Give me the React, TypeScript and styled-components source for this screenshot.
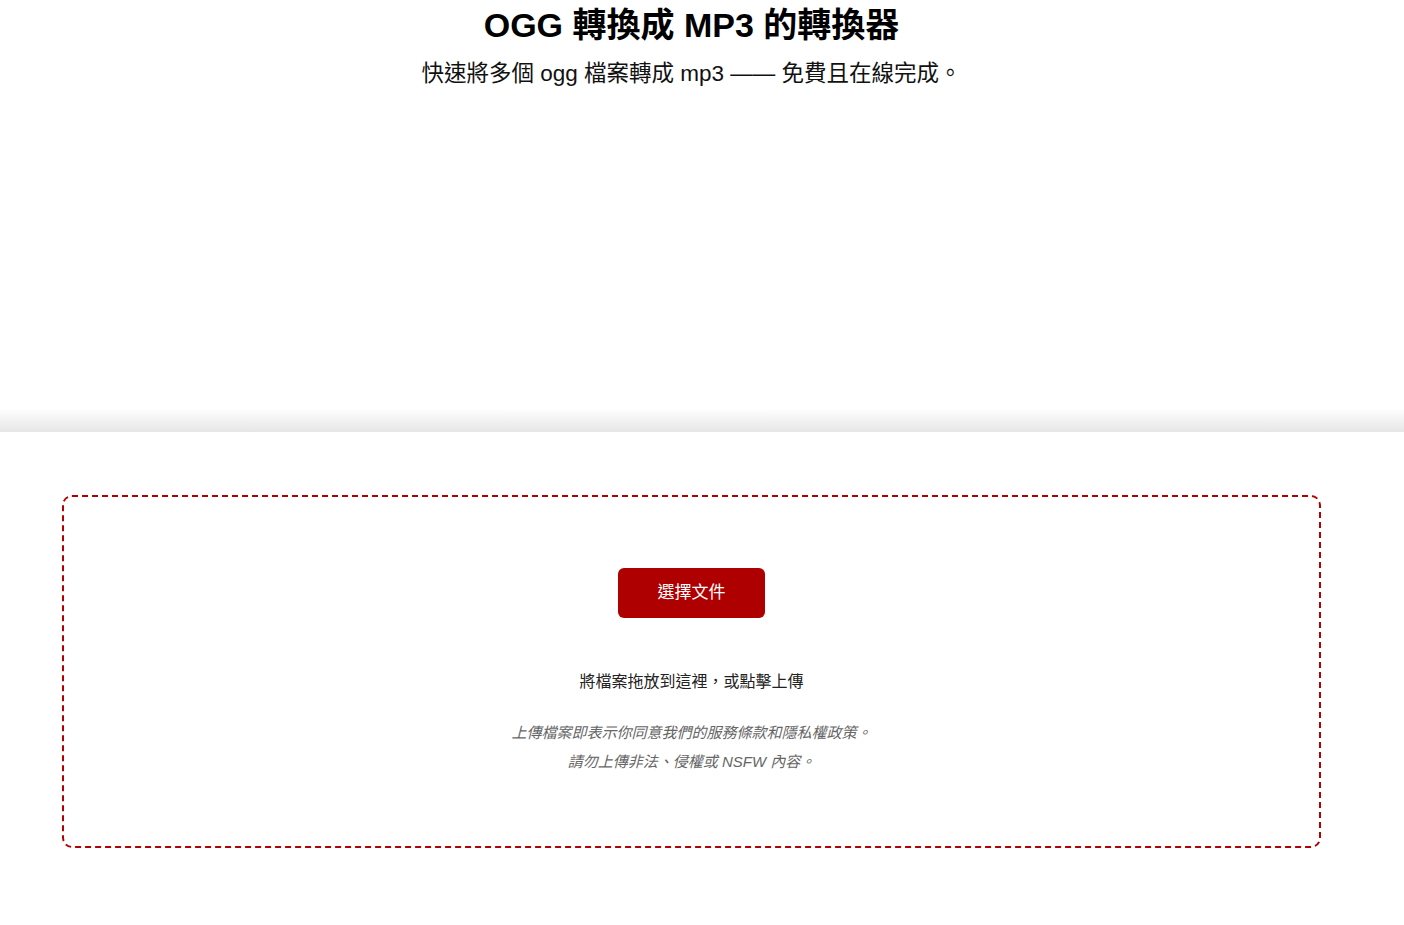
import React from "react";
import styled, { createGlobalStyle } from "styled-components";

const GlobalStyle = createGlobalStyle`
  body {
    margin: 0;
    background: #fff;
    font-family: "Liberation Sans", Arial, "Noto Sans CJK TC", sans-serif;
  }
`;

const Hero = styled.header`
  height: 432px;
  box-sizing: border-box;
  padding: 1px 21px 0 0;
  text-align: center;
  background: linear-gradient(
    to bottom,
    #ffffff 0,
    #ffffff 408px,
    #e6e6e6 432px
  );
`;

const Title = styled.h1`
  margin: 0;
  font-size: 34px;
  line-height: 48px;
  font-weight: 700;
  color: #000;
`;

const Subtitle = styled.p`
  margin: 8px 0 0;
  font-size: 22.5px;
  line-height: 33px;
  color: #111;
`;

const Main = styled.main`
  padding: 63px 83px 0 62px;
`;

const DropZone = styled.section`
  border: 2px dashed #b00000;
  border-radius: 10px;
  padding: 71px 20px 70px;
  display: flex;
  flex-direction: column;
  align-items: center;
`;

const PickButton = styled.button`
  width: 147px;
  height: 50px;
  padding: 0 0 5px;
  border: none;
  border-radius: 6px;
  background: #ae0000;
  color: #fff;
  font-family: inherit;
  font-size: 17px;
  cursor: pointer;
`;

const DropHint = styled.p`
  margin: 53px 0 0;
  font-size: 16px;
  line-height: 22px;
  color: #222;
`;

const Notice = styled.div`
  margin-top: 25px;
  text-align: center;
`;

const NoticeLine = styled.p`
  margin: 0;
  font-size: 15px;
  line-height: 29px;
  font-style: italic;
  color: #666;
`;

export default function App() {
  return (
    <>
      <GlobalStyle />
      <Hero>
        <Title>OGG 轉換成 MP3 的轉換器</Title>
        <Subtitle>快速將多個 ogg 檔案轉成 mp3 —— 免費且在線完成。</Subtitle>
      </Hero>
      <Main>
        <DropZone>
          <PickButton type="button">選擇文件</PickButton>
          <DropHint>將檔案拖放到這裡，或點擊上傳</DropHint>
          <Notice>
            <NoticeLine>上傳檔案即表示你同意我們的服務條款和隱私權政策。</NoticeLine>
            <NoticeLine>請勿上傳非法、侵權或 NSFW 內容。</NoticeLine>
          </Notice>
        </DropZone>
      </Main>
    </>
  );
}
